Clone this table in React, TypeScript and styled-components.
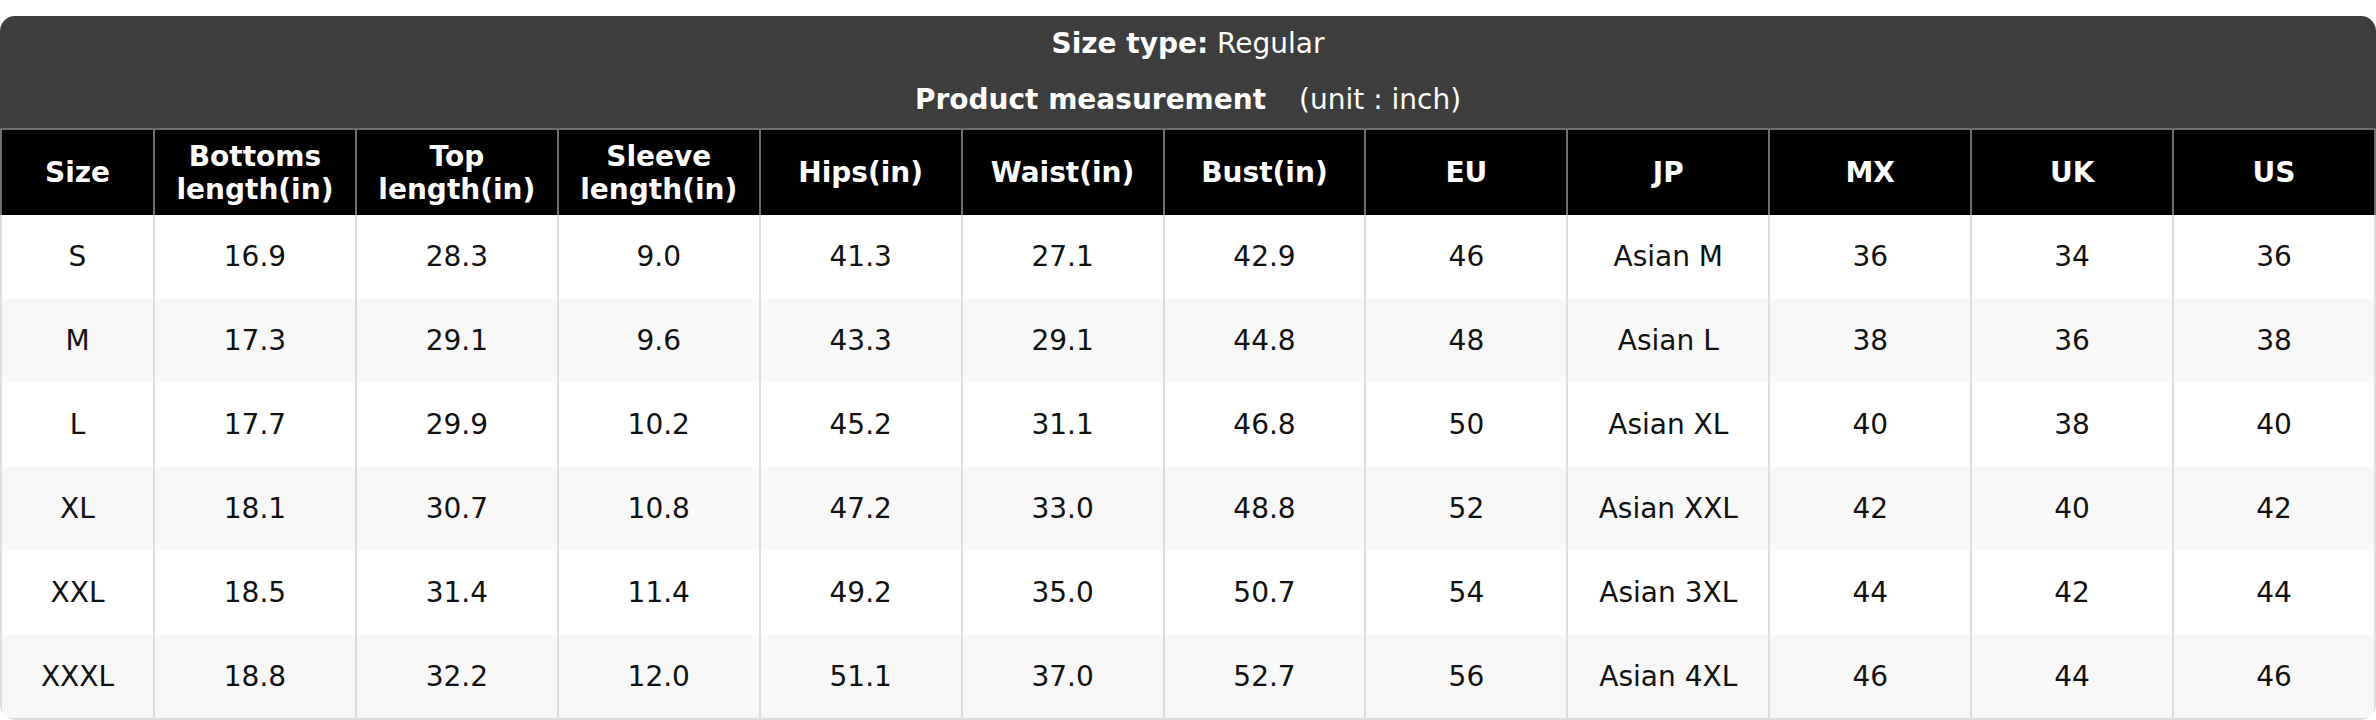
import * as React from 'react'
import styled, { createGlobalStyle } from 'styled-components'

const GlobalStyle = createGlobalStyle`
  html, body {
    margin: 0;
    padding: 0;
    background: #ffffff;
  }
  body {
    font-family: 'DejaVu Sans', 'Noto Sans', sans-serif;
    color: #111111;
  }
`

const columns = [
  'Size',
  'Bottoms length(in)',
  'Top length(in)',
  'Sleeve length(in)',
  'Hips(in)',
  'Waist(in)',
  'Bust(in)',
  'EU',
  'JP',
  'MX',
  'UK',
  'US',
]

const rows = [
  ['S', '16.9', '28.3', '9.0', '41.3', '27.1', '42.9', '46', 'Asian M', '36', '34', '36'],
  ['M', '17.3', '29.1', '9.6', '43.3', '29.1', '44.8', '48', 'Asian L', '38', '36', '38'],
  ['L', '17.7', '29.9', '10.2', '45.2', '31.1', '46.8', '50', 'Asian XL', '40', '38', '40'],
  ['XL', '18.1', '30.7', '10.8', '47.2', '33.0', '48.8', '52', 'Asian XXL', '42', '40', '42'],
  ['XXL', '18.5', '31.4', '11.4', '49.2', '35.0', '50.7', '54', 'Asian 3XL', '44', '42', '44'],
  ['XXXL', '18.8', '32.2', '12.0', '51.1', '37.0', '52.7', '56', 'Asian 4XL', '46', '44', '46'],
]

export default function App() {
  return (
    <>
      <GlobalStyle />
      <Page>
        <Card>
          <Caption>
            <CaptionLine>
              <Strong>Size type:</Strong> Regular
            </CaptionLine>
            <CaptionLine>
              <Strong>Product measurement</Strong>
              <Unit>(unit : inch)</Unit>
            </CaptionLine>
          </Caption>
          <Table>
            <colgroup>
              <SizeCol />
              {columns.slice(1).map((c) => (
                <col key={c} />
              ))}
            </colgroup>
            <thead>
              <tr>
                {columns.map((c) => (
                  <Th key={c}>
                    {c.includes(' length') ? (
                      <>
                        {c.split(' ')[0]}
                        <br />
                        {c.split(' ')[1]}
                      </>
                    ) : (
                      c
                    )}
                  </Th>
                ))}
              </tr>
            </thead>
            <tbody>
              {rows.map((r, i) => (
                <Tr key={r[0]} $striped={i % 2 === 1}>
                  {r.map((v, j) => (
                    <Td key={j}>{v}</Td>
                  ))}
                </Tr>
              ))}
            </tbody>
          </Table>
        </Card>
      </Page>
    </>
  )
}

const Page = styled.div`
  padding-top: 16px;
`

const Card = styled.div`
  border-radius: 15px;
  overflow: hidden;
  background: #ffffff;
`

const Caption = styled.div`
  display: flex;
  flex-direction: column;
  align-items: center;
  gap: 20px;
  padding: 10px 0 10px;
  background: #3d3d3d;
  color: #ffffff;
  font-size: 28px;
`

const CaptionLine = styled.div`
  height: 36px;
  line-height: 36px;
  white-space: pre;
`

const Strong = styled.span`
  font-weight: bold;
`

const Unit = styled.span`
  margin-left: 33px;
`

const Table = styled.table`
  width: 100%;
  table-layout: fixed;
  border-collapse: collapse;
  font-size: 28px;
`

const SizeCol = styled.col`
  width: 153px;
`

const Th = styled.th`
  height: 85px;
  padding: 0 6px;
  background: #000000;
  color: #ffffff;
  font-weight: bold;
  line-height: 33px;
  text-align: center;
  vertical-align: middle;
  border: 2px solid #6e6e6e;
  border-bottom: none;
`

const Tr = styled.tr<{ $striped: boolean }>`
  height: 84px;
  background: ${(p) => (p.$striped ? '#f8f8f8' : '#ffffff')};

  &:last-child td {
    border-bottom: 2px solid #dddddd;
  }
`

const Td = styled.td`
  padding: 0 6px;
  text-align: center;
  vertical-align: middle;
  color: #111111;
  line-height: 32px;
  border-left: 2px solid #dddddd;
  border-right: 2px solid #dddddd;
`
